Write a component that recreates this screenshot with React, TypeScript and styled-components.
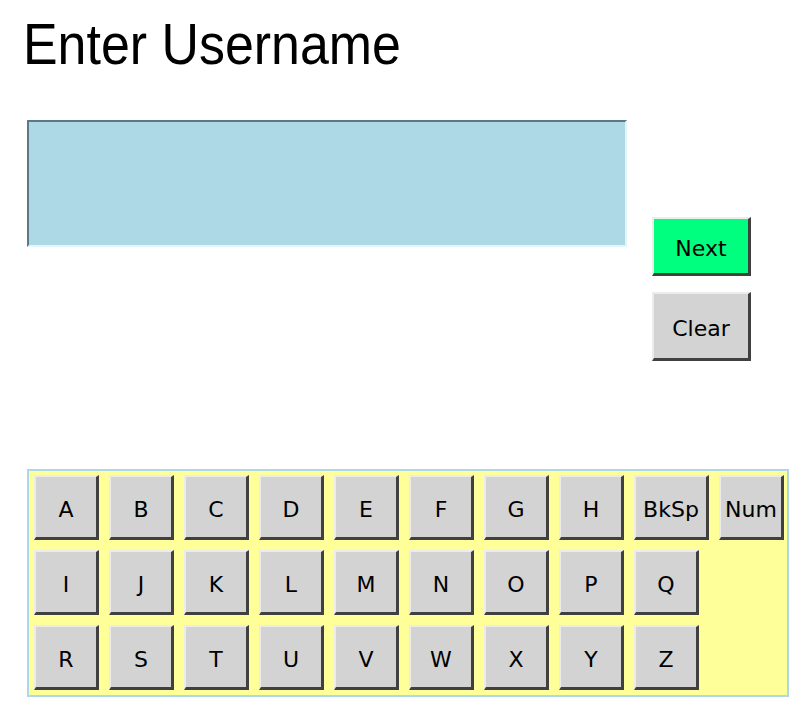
import React from "react";
import styled, { createGlobalStyle } from "styled-components";

const Global = createGlobalStyle`
  html, body { margin: 0; padding: 0; background: #ffffff; }
  body { font-family: "DejaVu Sans", "Liberation Sans", sans-serif; }
`;

const Page = styled.div`
  width: 807px;
  height: 707px;
  box-sizing: border-box;
  padding: 15px 0 0 27px;
  display: flex;
  flex-direction: column;
`;

const Title = styled.h1`
  margin: 0 0 0 -4px;
  font-family: "Liberation Sans", Arial, sans-serif;
  font-weight: 400;
  font-size: 58px;
  line-height: 57px;
  color: #000;
  transform: scaleX(0.895);
  transform-origin: left center;
  white-space: nowrap;
`;

const EntryRow = styled.div`
  margin-top: 48px;
  display: flex;
  gap: 25px;
  align-items: flex-start;
`;

const Field = styled.div`
  width: 600px;
  height: 127px;
  box-sizing: border-box;
  background: #add8e6;
  border-top: 2px solid #5d7884;
  border-left: 2px solid #5d7884;
  border-right: 2px solid #e6f3f7;
  border-bottom: 2px solid #e6f3f7;
`;

const SideButtons = styled.div`
  padding-top: 97px;
  display: flex;
  flex-direction: column;
  gap: 16px;
`;

const Button = styled.button<{ $bg: string; $h: number; $w: number }>`
  width: ${(p) => p.$w}px;
  height: ${(p) => p.$h}px;
  box-sizing: border-box;
  margin: 0;
  padding: 4px 0 0 0;
  background: ${(p) => p.$bg};
  border-top: 2px solid #ececec;
  border-left: 2px solid #ececec;
  border-right: 3px solid #404040;
  border-bottom: 3px solid #404040;
  font-family: "DejaVu Sans", "Liberation Sans", sans-serif;
  font-size: 22px;
  color: #000;
  display: flex;
  align-items: center;
  justify-content: center;
  cursor: pointer;
`;

const Keyboard = styled.div`
  margin-top: 108px;
  width: 762px;
  box-sizing: border-box;
  background: #ffff99;
  border: 2px solid #add8e6;
  padding: 4px 3px 5px 5px;
  display: flex;
  flex-direction: column;
  gap: 10px;
`;

const KeyRow = styled.div`
  display: flex;
  gap: 10px;
`;

const rows: string[][] = [
  ["A", "B", "C", "D", "E", "F", "G", "H", "BkSp", "Num"],
  ["I", "J", "K", "L", "M", "N", "O", "P", "Q"],
  ["R", "S", "T", "U", "V", "W", "X", "Y", "Z"],
];

export default function App() {
  return (
    <>
      <Global />
      <Page>
        <Title>Enter Username</Title>
        <EntryRow>
          <Field />
          <SideButtons>
            <Button $bg="#00ff7f" $w={99} $h={59}>Next</Button>
            <Button $bg="#d3d3d3" $w={99} $h={69}>Clear</Button>
          </SideButtons>
        </EntryRow>
        <Keyboard>
          {rows.map((row, i) => (
            <KeyRow key={i}>
              {row.map((k) => (
                <Button key={k} $bg="#d3d3d3" $w={k === "BkSp" ? 75 : 65} $h={65}>
                  {k}
                </Button>
              ))}
            </KeyRow>
          ))}
        </Keyboard>
      </Page>
    </>
  );
}
